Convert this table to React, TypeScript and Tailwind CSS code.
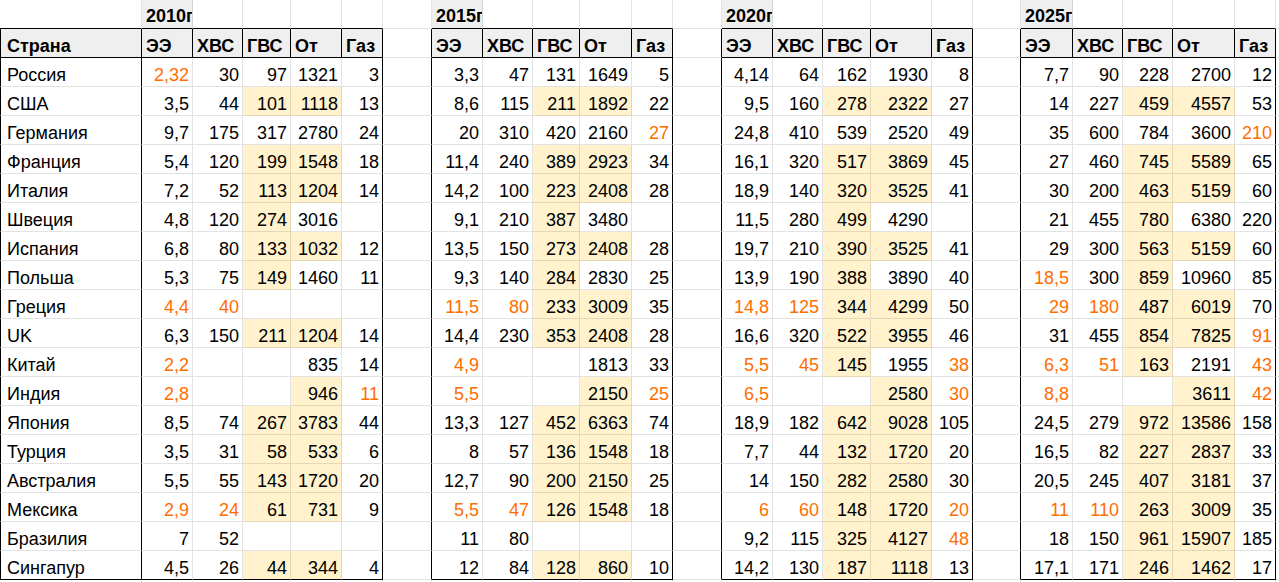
import React from "react";

const countries = [
  "Россия", "США", "Германия", "Франция", "Италия", "Швеция", "Испания", "Польша", "Греция",
  "UK", "Китай", "Индия", "Япония", "Турция", "Австралия", "Мексика", "Бразилия", "Сингапур",
];

const years = ["2010г", "2015г", "2020г", "2025г"];
const heads = ["ЭЭ", "ХВС", "ГВС", "От", "Газ"];

// "!" = orange text, "*" = yellow fill, "-" = empty
const tables: string[][] = [
  [
    "2,32! 30 97 1321 3",
    "3,5 44 101* 1118* 13",
    "9,7 175 317 2780 24",
    "5,4 120 199* 1548* 18",
    "7,2 52 113* 1204* 14",
    "4,8 120 274* 3016 -",
    "6,8 80 133* 1032* 12",
    "5,3 75 149* 1460 11",
    "4,4! 40! - - -",
    "6,3 150 211* 1204* 14",
    "2,2! - - 835 14",
    "2,8! - - 946* 11!",
    "8,5 74 267* 3783* 44",
    "3,5 31 58* 533* 6",
    "5,5 55 143* 1720* 20",
    "2,9! 24! 61* 731* 9",
    "7 52 - - -",
    "4,5 26 44* 344* 4",
  ],
  [
    "3,3 47 131 1649 5",
    "8,6 115 211* 1892* 22",
    "20 310 420 2160 27!",
    "11,4 240 389* 2923* 34",
    "14,2 100 223* 2408* 28",
    "9,1 210 387* 3480 -",
    "13,5 150 273* 2408* 28",
    "9,3 140 284* 2830 25",
    "11,5! 80! 233* 3009* 35",
    "14,4 230 353* 2408* 28",
    "4,9! - - 1813 33",
    "5,5! - - 2150* 25!",
    "13,3 127 452* 6363* 74",
    "8 57 136* 1548* 18",
    "12,7 90 200* 2150* 25",
    "5,5! 47! 126* 1548* 18",
    "11 80 - - -",
    "12 84 128* 860* 10",
  ],
  [
    "4,14 64 162 1930 8",
    "9,5 160 278* 2322* 27",
    "24,8 410 539 2520 49",
    "16,1 320 517* 3869* 45",
    "18,9 140 320* 3525* 41",
    "11,5 280 499* 4290 -",
    "19,7 210 390* 3525* 41",
    "13,9 190 388* 3890 40",
    "14,8! 125! 344* 4299* 50",
    "16,6 320 522* 3955* 46",
    "5,5! 45! 145* 1955 38!",
    "6,5! - - 2580* 30!",
    "18,9 182 642* 9028* 105",
    "7,7 44 132* 1720* 20",
    "14 150 282* 2580* 30",
    "6! 60! 148* 1720* 20!",
    "9,2 115 325* 4127* 48!",
    "14,2 130 187* 1118* 13",
  ],
  [
    "7,7 90 228 2700 12",
    "14 227 459* 4557* 53",
    "35 600 784 3600 210!",
    "27 460 745* 5589* 65",
    "30 200 463* 5159* 60",
    "21 455 780* 6380 220",
    "29 300 563* 5159* 60",
    "18,5! 300 859* 10960 85",
    "29! 180! 487* 6019* 70",
    "31 455 854* 7825* 91!",
    "6,3! 51! 163* 2191 43!",
    "8,8! - - 3611* 42!",
    "24,5 279 972* 13586* 158",
    "16,5 82 227* 2837* 33",
    "20,5 245 407* 3181* 37",
    "11! 110! 263* 3009* 35",
    "18 150 961* 15907* 185",
    "17,1 171 246* 1462* 17",
  ],
];

const ROWS = 21;
const COLS = 25;

const inTable = (c: number) => c === 0 || (c < 24 && c % 6 !== 0);

function Cell({ r, c }: { r: number; c: number }) {
  const t = Math.floor(c / 6);
  const k = (c % 6) - 1;

  let text = "";
  let orange = false;
  let yellow = false;
  let grey = false;
  let bold = false;
  let left = false;

  if (r === 0) {
    if (c < 24 && c % 6 === 1) {
      text = years[t];
      grey = true;
      bold = true;
      left = true;
    }
  } else if (r === 1) {
    if (c === 0) {
      text = "Страна";
    } else if (inTable(c)) {
      text = heads[k];
    }
    if (inTable(c)) {
      grey = true;
      bold = true;
      left = true;
    }
  } else if (r <= 19) {
    if (c === 0) {
      text = countries[r - 2];
      left = true;
    } else if (inTable(c)) {
      let v = tables[t][r - 2].split(" ")[k];
      if (v.endsWith("*")) {
        yellow = true;
        v = v.slice(0, -1);
      }
      if (v.endsWith("!")) {
        orange = true;
        v = v.slice(0, -1);
      }
      text = v === "-" ? "" : v;
    }
  }

  const blackRight =
    r >= 1 &&
    r <= 19 &&
    (c === 0 || c === 5 || c === 11 || c === 17 || c === 23 || c === 6 || c === 12 || c === 18 || (r === 1 && inTable(c)));
  const blackBottom = inTable(c) && (r === 0 || r === 1 || r === 19);

  return (
    <div
      className={[
        "flex h-[29px] items-end overflow-hidden whitespace-nowrap border-r border-b",
        blackRight ? "border-r-black" : "border-r-[rgba(0,0,0,0.11)]",
        blackBottom ? "border-b-black" : "border-b-[rgba(0,0,0,0.11)]",
        c === 0 && r >= 1 && r <= 19 ? "border-l border-l-black" : "",
        grey ? "bg-[#efefef]" : yellow ? "bg-[#fff2cc]" : "bg-white",
        bold ? "font-bold" : "",
        orange ? "text-[#ff6d01]" : "text-black",
        left ? "justify-start" : "justify-end pr-[3px]",
        c === 0 ? "pl-[6px]" : left ? "pl-[4px]" : "",
        r === 0 ? "pb-[2px]" : "pb-[1px]",
      ].join(" ")}
    >
      {text}
    </div>
  );
}

export default function App() {
  const cells = [];
  for (let r = 0; r < ROWS; r++) {
    for (let c = 0; c < COLS; c++) {
      cells.push(<Cell key={r + "-" + c} r={r} c={c} />);
    }
  }
  return (
    <div className="h-[582px] w-[1279px] overflow-hidden bg-white font-['Liberation_Sans',Arial,sans-serif] text-[18px] leading-[20px]">
      <div className="grid grid-cols-[142px_51px_50px_48px_51px_41px_49px_51px_50px_47px_52px_41px_49px_51px_50px_48px_61px_41px_48px_52px_50px_50px_62px_41px_1fr]">
        {cells}
      </div>
    </div>
  );
}
